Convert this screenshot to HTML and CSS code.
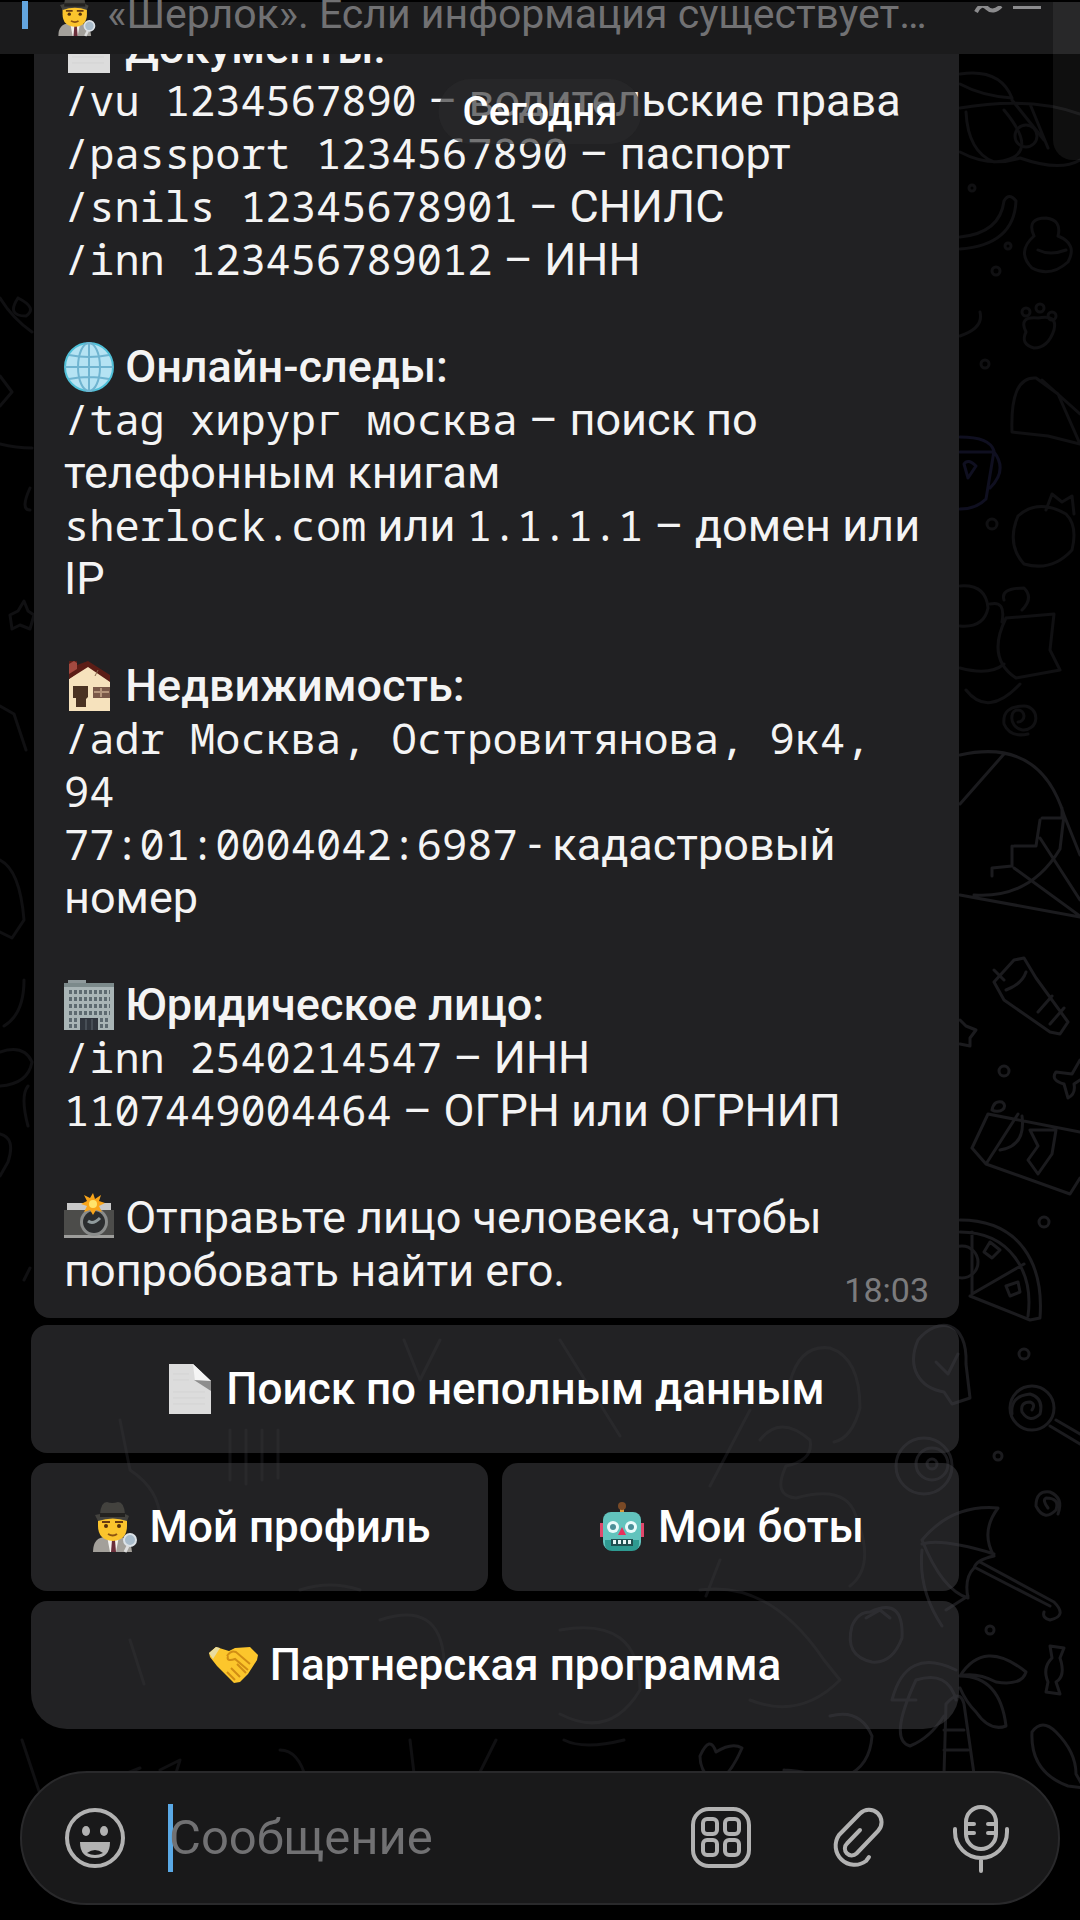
FILE: index.html
```html
<!DOCTYPE html>
<html lang="ru">
	<head>
		<meta charset="UTF-8">
		<meta name="viewport" content="width=device-width, initial-scale=1">
		<title>Шерлок</title>
		<link rel="stylesheet" href="styles.css">
	</head>
	<body>
		<!-- иконки -->
		<svg class="sprite" aria-hidden="true">
			<symbol id="doc" viewBox="0 0 50 50">
				<path d="M4 0h24l18 17v33H4z" fill="#dcdcdc"/>
				<path d="M28 0l18 17H30z" fill="#f5f5f5"/>
				<path d="M29 16l17 1v10z" fill="#8d8d8d"/>
				<path d="M8 10h16M8 16h16M8 28h32M8 34h32M8 40h32" stroke="#d3d3d3" stroke-width="1"/>
			</symbol>
			<symbol id="globe" viewBox="0 0 50 50">
				<circle cx="25" cy="25" r="24" fill="#b5e3f3" stroke="#4fc0d8" stroke-width="2"/>
				<g fill="none" stroke="#6fb4d0" stroke-width="2">
					<ellipse cx="25" cy="25" rx="11" ry="24"/>
					<path d="M25 1v48M1 25h48M5 13q20 4 40 0M5 37q20-4 40 0"/>
				</g>
			</symbol>
			<symbol id="house" viewBox="0 0 50 50">
				<path d="M5 18L24 4l22 15v31H5z" fill="#f6e2bd"/>
				<path d="M5 0h8v4l11-4 22 14v7L24 6 5 18z" fill="#5c1d16"/>
				<path d="M5 3l5-3 3 2v6l-8 5z" fill="#a34a40"/>
				<path d="M9 25h15v11l-2 2v8H12v-9H9z" fill="#4a3222"/>
				<path d="M29 26h17v11H29z" fill="#7a5848"/>
				<path d="M31 15l3-6" stroke="#8a6a50" stroke-width="1"/>
				<path d="M30 31h15M37 27v9" stroke="#b5947a" stroke-width="2"/>
			</symbol>
			<symbol id="office" viewBox="0 0 50 50">
				<path d="M4 0h18v4H4z" fill="#8f9a9c"/>
				<path d="M0 3h50v47H0z" fill="#a9b5b6"/>
				<path d="M0 3h50v4H0z" fill="#7c8a8b"/>
				<path d="M5 12h41M5 19h41M5 26h41M5 33h41M5 40h10M36 40h10M5 46h10M36 46h10" stroke="#5d6a70" stroke-width="4" stroke-dasharray="3 2"/>
				<path d="M16 38h18v12H16z" fill="#30353d"/>
				<path d="M22 39v11M28 39v11" stroke="#5e6870" stroke-width="1"/>
			</symbol>
			<symbol id="camera" viewBox="0 0 50 50">
				<path d="M3 10h44v8H3z" fill="#c9c9c9"/>
				<path d="M0 17h50v27H0z" fill="#4c4c4a"/>
				<path d="M0 42h50v3H0z" fill="#9d9d9b"/>
				<circle cx="30" cy="29" r="14" fill="#8a8c8b"/>
				<circle cx="30" cy="29" r="11" fill="#2b2d2f"/>
				<path d="M24 28q5 4 12-3" stroke="#8f9a9c" stroke-width="3" fill="none"/>
				<path d="M29 0l2 6 6-4-2 6 6 2-6 3 3 6-6-2-3 5-3-5-6 2 3-6-6-2 6-3-3-6 6 3z" fill="#f9a51a"/>
				<circle cx="29" cy="11" r="4" fill="#ffe46b"/>
			</symbol>
			<symbol id="detective" viewBox="0 0 50 50">
				<path d="M4 50q0-15 13-15h12q13 0 14 15z" fill="#a3a09a"/>
				<path d="M18 34h12l-3 16h-6z" fill="#f4f2ee"/>
				<path d="M23 38h3l1 12h-5z" fill="#6b2f3b"/>
				<path d="M9 15h29v9q0 14-14 15Q9 38 9 24z" fill="#fbc42d"/>
				<path d="M13 20h8M26 20h8" stroke="#6a3d12" stroke-width="2"/>
				<circle cx="17" cy="24" r="2" fill="#54300c"/>
				<circle cx="30" cy="24" r="2" fill="#54300c"/>
				<path d="M19 32q5 3 9 0" stroke="#8d5412" stroke-width="2" fill="none"/>
				<path d="M11 12q1-12 7-12 5 2 11 0 6 0 7 12l4 2-2 5q-14-5-29 0l-3-6z" fill="#43423e"/>
				<path d="M11 11h25v4H11z" fill="#232220"/>
				<circle cx="41" cy="38" r="6" fill="#a9bccb" stroke="#dce2e7" stroke-width="2"/>
				<path d="M39 44l-3 6" stroke="#dedede" stroke-width="3"/>
			</symbol>
			<symbol id="robot" viewBox="0 0 50 50">
				<path d="M25 1v10" stroke="#d89a3c" stroke-width="4"/>
				<circle cx="25" cy="4" r="4" fill="#7a4a26"/>
				<path d="M3 21h4v14H3zM43 21h4v14h-4z" fill="#e0486c"/>
				<rect x="6" y="10" width="38" height="38" rx="8" fill="#62c3bd"/>
				<path d="M8 38h34v4q0 7-7 7H15q-7 0-7-7z" fill="#2e9a91"/>
				<circle cx="16" cy="25" r="6" fill="#e9fbfb"/>
				<circle cx="34" cy="25" r="6" fill="#e9fbfb"/>
				<circle cx="16" cy="25" r="3" fill="#4b8f98"/>
				<circle cx="34" cy="25" r="3" fill="#4b8f98"/>
				<path d="M25 25l4 8h-8z" fill="#e8305c"/>
				<path d="M14 37h22v7H14z" fill="#1f4f50"/>
				<path d="M16 40h18" stroke="#e6f5f4" stroke-width="4" stroke-dasharray="3 2"/>
			</symbol>
			<symbol id="hands" viewBox="0 0 50 50">
				<path d="M0 13L7 7l13 4 6-3 15-1 8 8-1 5-9 14-8 8-6 1-17-17-7-9z" fill="#fcc62c"/>
				<path d="M0 13l7-6 4 1-7 11z" fill="#e9dca0"/>
				<path d="M18 16q4-6 9-4l14 12M19 16q-2 6 7 3l13 11M22 28l9 9M18 32l8 8M28 24l9 9" stroke="#d18d14" stroke-width="2" fill="none"/>
			</symbol>
		</svg>

		<!-- рисунок обоев чата -->
		<svg class="wallpaper" viewBox="0 0 1080 1920" preserveAspectRatio="xMidYMid slice" aria-hidden="true">
			<g class="far">
				<path d="M960 74q40-6 52 24M960 84q22 12 52 14M960 108q70-12 120 6M966 112q2 40 28 50 50-4 10-52M960 152q30 16 60 6 40 14 60 2M1012 100l32 40M1030 104l18 44"/>
				<circle cx="1026" cy="136" r="11"/>
				<path d="M960 237q40-4 44-36 5-9 12 0-2 44-56 48"/>
				<path d="M1034 236q-8-18 12-18 16 2 12 18 20 8 10 26-18 16-36 6-16-16 2-32M1038 250q12 6 28 0"/>
				<path d="M1026 332q-8-16 12-14 20-4 16 12-6 18-20 18-14-4-8-16"/>
				<circle cx="1026" cy="312" r="4"/><circle cx="1040" cy="308" r="4"/><circle cx="1052" cy="316" r="4"/>
				<path d="M1012 432q-2-56 24-54l22 16 22 50-32-8zM1042 380l38 34M960 336q24-8 20-24"/>
				<path class="blue" d="M960 437q30 0 34 14l-8 48q-10 10-26 10M960 452h32M994 452q14 18-4 36M964 464q4-6 12 2l-8 12z"/>
				<path d="M1018 516q20-18 48-2 12 12 6 36-20 22-48 14-18-20-6-48M1046 510l6-16 10 8 10-6 2 18"/>
				<path d="M960 586q26-2 28 22-4 20-28 18M990 604q16-4 12 18M1004 600q-4-12 20-12 10 10-2 22M1006 618l48-4-4 36 10 20-44 8q-30-20-10-60M960 668q30 8 44-4M966 690q22 28 54-6"/>
				<path d="M1018 722a6 6 0 1 0-6-6 12 12 0 1 0 12-10q-22 0-20 18 6 14 24 10"/>
				<circle cx="972" cy="188" r="3"/><circle cx="1008" cy="246" r="3"/><circle cx="996" cy="271" r="4"/><circle cx="985" cy="364" r="4"/><circle cx="992" cy="524" r="5"/>
				<path d="M0 376l12 16-12 14M0 444q16 4 32 4M30 488q-10 22 0 22M10 615l8-4 6-10 4 10 6 4-4 14-10-4-8 4zM0 706l14 8 12 36M0 860q20 10 24 60l-12 18-12-6M0 298q12 20 32 34M18 298q20 10 8 18-20 0-8-18"/>
				<path d="M24 980q0 34-20 46M0 1052q24-8 32 10-4 22-32 24M28 1086q-8 10 0 40M0 1134q16 4 8 28l-8 14M24 1280l6-12"/>
			</g>
			<g class="near">
				<path d="M960 755q80-18 104 60l-4 34q-30 50-86 46M960 895l120 22M1064 815l16 40M1042 818h20v-10M1014 846h22l4-26M992 876v-8l20-2v-20M1014 868l66 48M1040 838l40 62M960 804l44-50"/>
				<path d="M994 982l20-22 10-2 12 20 32 44-8 12-10-2-46-32zM1006 990q16-6 20-18M1038 1012l14-16M1050 1024l14-16M994 970l10 10"/>
				<path d="M960 1020l6 6 10 4-6 8v8l-10-2"/>
				<path d="M1080 1060l-8 14-16-2q-6 8 8 12l4 14q8-4 6-14l6-4"/>
				<path d="M972 1148l16-34 92 18M972 1148l14 16 84 30 10-16M986 1164l32-50M1000 1150q26-4 22-34M1030 1130l26 0-4 24-14 20-10-14 10-14zM992 1110a7 5 0 1 0 10-8q-8-2-10 8"/>
				<path d="M960 1220c60 0 84 44 80 98l-10 2-60-24M960 1232c50 0 74 40 68 84M972 1232v62l52-30M1000 1250l-10-8-6 10 8 6zM1010 1296l-4-10 12-4 2 10z"/>
				<circle cx="962" cy="1262" r="16"/>
				<path d="M918 1340c20-24 50-20 48 24l4 34-18 6-8-12c-24-4-38-24-26-52M936 1362l12 12 10-20"/>
				<circle cx="1032" cy="1408" r="22"/>
				<path d="M1032 1410q4-6-2-8-10 0-8 10 8 12 18 2 4-16-10-20-20 2-18 20M1050 1426l30 18M1056 1420l24 14"/>
				<circle cx="924" cy="1466" r="28"/><circle cx="932" cy="1464" r="16"/><circle cx="932" cy="1464" r="5"/>
				<path d="M1048 1508q-6-8-2-10 14 0 10 12-12 12-20-4 0-16 14-14 14 6 8 22"/>
				<path d="M922 1540q30-36 76-32-18 24-4 48-18 4-20 12-10 10-6 30-26-8-46-58M922 1544q20-6 72 10M922 1550q-4 40 20 76M976 1568l74 38M980 1562l74 40q14 14-4 18-8-2-6-8M968 1596l-22 14"/>
				<path d="M870 1612q34-16 32 26-10 26-30 24-28-6-20-36 6-14 18-14M866 1618l14-8 10 8"/>
				<path d="M960 1676q24-38 66-4-4 14-30 10-20-10-36-6 40 0 46 50-16 6-30-14-10-10-16-24M956 1700q-8-30-40-20-28 60-6 66 20-8 34-30M956 1670q-50-24-64 30l24 0M946 1704q14-16 18 0l10 70M946 1704l-2 70M944 1730h20M944 1750h24"/>
				<path d="M1050 1646l14 2-4 10q6 18-4 24l4 12-14-2 2-10q-6-14 4-24z"/>
				<path d="M1032 1732q10-14 24 0 20 20 20 42l8 14-16-2q-38-14-36-54M784 1770q40 2 50 20-6 24-30 22-16-6-20-42M830 1716q30-8 42 20-2 30-26 40M700 1756q10-22 16-4 16-10 26-4-12 28-26 34-16-8-16-26M950 1774v26M974 1774l4 26"/>
				<circle cx="1044" cy="1222" r="5"/><circle cx="1024" cy="1354" r="5"/><circle cx="998" cy="1456" r="4"/><circle cx="990" cy="1630" r="4"/><circle cx="1004" cy="1071" r="5"/>
			</g>
			<g class="dim">
				<path d="M564 1740q20 10 60 0M410 1740l6 50 60-10 20-40M280 1750q24 0 30 50M22 1740l20 60M110 1780l30-12M160 1770l20-10-8 26"/>
				<path d="M790 1382q10-38 40-34 30 10 30 60-8 30-26 34M750 1410l-40 76M760 1440q20-26 50 0 4 20-24 26-14 30 10 32 50-14 60 18 20 50-6 70M700 1590q70-10 124 70l16 20q-40 40-90 20M720 1560l-14 36M404 1340l16 40 20-40M560 1340l60 96M120 1420l10 50q30 20 30 50M230 1430v50M246 1430v54M262 1430v50M278 1430v48M380 1620q60-20 64 40M560 1630q80-14 80 60-30 50-80 24M130 1640l14 44M300 1590q30-10 60 0"/>
			</g>
		</svg>

		<header class="pinned">
			<span class="pinned-bar"></span>
			<p class="pinned-text"><svg class="emoji"><use href="#detective"/></svg> «Шерлок». Если информация существует…</p>
			<button class="pinned-list" type="button" aria-label="Закреплённые сообщения">
				<svg viewBox="0 0 68 10"><path d="M2 6Q7-4 13 2t14-2M39 1h28"/></svg>
			</button>
		</header>

		<main class="chat">
			<time class="day">Сегодня</time>
			<article class="message">
				<p><svg class="emoji"><use href="#doc"/></svg> <b>Документы:</b><br>
				<code>/vu 1234567890</code> – водительские права<br>
				<code>/passport 1234567890</code> – паспорт<br>
				<code>/snils 12345678901</code> – СНИЛС<br>
				<code>/inn 123456789012</code> – ИНН</p>

				<p><svg class="emoji"><use href="#globe"/></svg> <b>Онлайн-следы:</b><br>
				<code>/tag хирург москва</code> – поиск по телефонным книгам<br>
				<code>sherlock.com</code> или <code>1.1.1.1</code> – домен или IP</p>

				<p><svg class="emoji"><use href="#house"/></svg> <b>Недвижимость:</b><br>
				<code>/adr Москва, Островитянова, 9к4, 94</code><br>
				<code>77:01:0004042:6987</code> - кадастровый номер</p>

				<p><svg class="emoji"><use href="#office"/></svg> <b>Юридическое лицо:</b><br>
				<code>/inn 2540214547</code> – ИНН<br>
				<code>1107449004464</code> – ОГРН или ОГРНИП</p>

				<p><svg class="emoji"><use href="#camera"/></svg> Отправьте лицо человека, чтобы попробовать найти его.</p>
				<time class="sent">18:03</time>
			</article>

			<div class="keyboard">
				<button class="key wide" type="button"><svg class="emoji"><use href="#doc"/></svg> Поиск по неполным данным</button>
				<button class="key" type="button"><svg class="emoji"><use href="#detective"/></svg> Мой профиль</button>
				<button class="key" type="button"><svg class="emoji"><use href="#robot"/></svg> Мои боты</button>
				<button class="key wide last" type="button"><svg class="emoji"><use href="#hands"/></svg> Партнерская программа</button>
			</div>
		</main>

		<form class="composer">
			<button class="tool" type="button" aria-label="Эмодзи">
				<svg viewBox="0 0 62 68">
					<circle cx="31" cy="34" r="28"/>
					<g class="fill"><ellipse cx="22" cy="27" rx="4" ry="5"/><ellipse cx="40" cy="27" rx="4" ry="5"/><path d="M16 38h30q0 16-15 16T16 38z"/></g>
					<path class="hole" d="M23 49q8-6 16 0-8 4-16 0z"/>
				</svg>
			</button>
			<span class="caret"></span>
			<input class="field" type="text" placeholder="Сообщение" aria-label="Сообщение">
			<button class="tool" type="button" aria-label="Команды">
				<svg viewBox="0 0 62 68">
					<rect x="3" y="5" width="56" height="57" rx="16"/>
					<rect x="13" y="15" width="14" height="15" rx="4"/><rect x="35" y="15" width="14" height="15" rx="4"/>
					<rect x="13" y="36" width="14" height="15" rx="4"/><rect x="35" y="36" width="14" height="15" rx="4"/>
				</svg>
			</button>
			<button class="tool" type="button" aria-label="Прикрепить файл">
				<svg viewBox="0 0 62 68"><path d="M40 26L27 39.5a6.5 6.5 0 0 0 9.5 10L58 27a12.5 12.5 0 0 0-18-17.5L19 31a19 19 0 0 0 27 26l3-4"/></svg>
			</button>
			<button class="tool" type="button" aria-label="Голосовое сообщение">
				<svg viewBox="0 0 62 68">
					<rect x="16" y="3" width="30" height="42" rx="15"/>
					<path d="M5 25v3a26 26 0 0 0 52 0v-3M31 55v12M16 20h8M16 29h8M38 20h8M38 29h8"/>
				</svg>
			</button>
		</form>
		<span class="edge"></span>
	</body>
</html>
```
FILE: styles.css
```css
*{
	margin: 0;
	padding: 0;
	box-sizing: border-box;
}

body{
	position: relative;
	display: flex;
	flex-direction: column;
	height: 100vh;
	overflow: hidden;
	background-color: #000;
	color: #f4f4f4;
	font: 44px/53px Roboto, sans-serif;
}

button, input{
	border: 0;
	background: none;
	color: inherit;
	font: inherit;
}

.sprite{
	position: absolute;
	width: 0;
	height: 0;
}

.emoji{
	width: 50px;
	height: 52px;
	vertical-align: -11px;
}

/* обои */
.wallpaper{
	position: absolute;
	width: 100%;
	height: 100%;
	fill: none;
	stroke-width: 3;
	stroke-linejoin: round;
	stroke-linecap: round;
}

.far{
	stroke: #101012;
}

.near{
	stroke: #1b1b1e;
}

.dim{
	stroke: #101012;
}

.blue{
	stroke: #0f0f20;
}

/* закреплённое сообщение */
.pinned{
	position: relative;
	display: flex;
	flex: none;
	align-items: flex-end;
	height: 54px;
	padding: 0 38px 15px 22px;
	border-top: 2px solid #000;
	background-color: #1b1b1c;
	color: #717173;
	font-size: 41px;
	line-height: 41px;
}

.pinned-bar{
	width: 6px;
	height: 28px;
	margin: 0 27px 10px 0;
	background-color: #63a5de;
}

.pinned-text{
	flex: 1;
	white-space: nowrap;
}

.pinned-text .emoji{
	width: 42px;
	height: 48px;
}

.pinned-list{
	align-self: flex-start;
	width: 68px;
	height: 10px;
	line-height: 0;
}

.pinned-list svg{
	width: 68px;
	height: 10px;
	fill: none;
	stroke: #8b8b8d;
	stroke-width: 4;
}

/* лента */
.chat{
	position: relative;
	display: flex;
	flex: 1;
	flex-direction: column;
	justify-content: flex-end;
	min-height: 0;
	padding: 0 121px 0 31px;
	overflow: hidden;
}

.day{
	position: absolute;
	z-index: 1;
	top: 25px;
	left: 50%;
	padding: 6px 24px;
	border-radius: 34px;
	background-color: rgba(42, 42, 44, .64);
	color: #fff;
	font-size: 40px;
	font-weight: 500;
	transform: translateX(-50%);
}

.message{
	position: relative;
	margin-left: 3px;
	padding: 21px 30px;
	border-radius: 16px;
	background-color: #212123;
	font-size: 45px;
}

.message p + p{
	margin-top: 54px;
}

.message b{
	font-weight: 500;
}

.message code{
	font: 42px/40px "Noto Sans Mono", "DejaVu Sans Mono", monospace;
}

.sent{
	position: absolute;
	right: 30px;
	bottom: 8px;
	color: #7b7b7d;
	font-size: 34px;
	line-height: 40px;
}

.keyboard{
	display: grid;
	grid-template-columns: 1fr 1fr;
	gap: 10px 14px;
	margin-top: 7px;
}

.key{
	height: 128px;
	border-radius: 16px;
	background-color: rgba(60, 60, 64, .56);
	color: #fff;
	font-weight: 500;
}

.wide{
	grid-column: span 2;
}

.last{
	border-radius: 16px 16px 36px 36px;
}

/* строка ввода */
.composer{
	position: relative;
	display: flex;
	flex: none;
	align-items: center;
	gap: 68px;
	height: 134px;
	margin: 42px 20px 15px;
	padding: 0 46px 0 42px;
	border: 2px solid #29292b;
	border-radius: 67px;
	background-color: #19191a;
}

.tool{
	flex: none;
	width: 62px;
	height: 68px;
}

.tool svg{
	display: block;
	width: 62px;
	height: 68px;
	overflow: visible;
	fill: none;
	stroke: #b2b2b2;
	stroke-width: 4;
	stroke-linecap: round;
	stroke-linejoin: round;
}

.tool .fill{
	fill: #b2b2b2;
	stroke: none;
}

.tool .hole{
	fill: #19191a;
	stroke: none;
}

.caret{
	width: 5px;
	height: 68px;
	margin: 0 -72px 0 -26px;
	background-color: #5aa9e6;
}

.field{
	flex: 1;
	min-width: 0;
	outline: 0;
	font-size: 49px;
	line-height: 60px;
}

.field::placeholder{
	color: #717173;
	opacity: 1;
}

/* боковая панель у края экрана */
.edge{
	position: absolute;
	top: 2px;
	right: 0;
	width: 27px;
	height: 158px;
	border-radius: 0 0 0 20px;
	background-color: rgba(255, 255, 255, .06);
}
```
